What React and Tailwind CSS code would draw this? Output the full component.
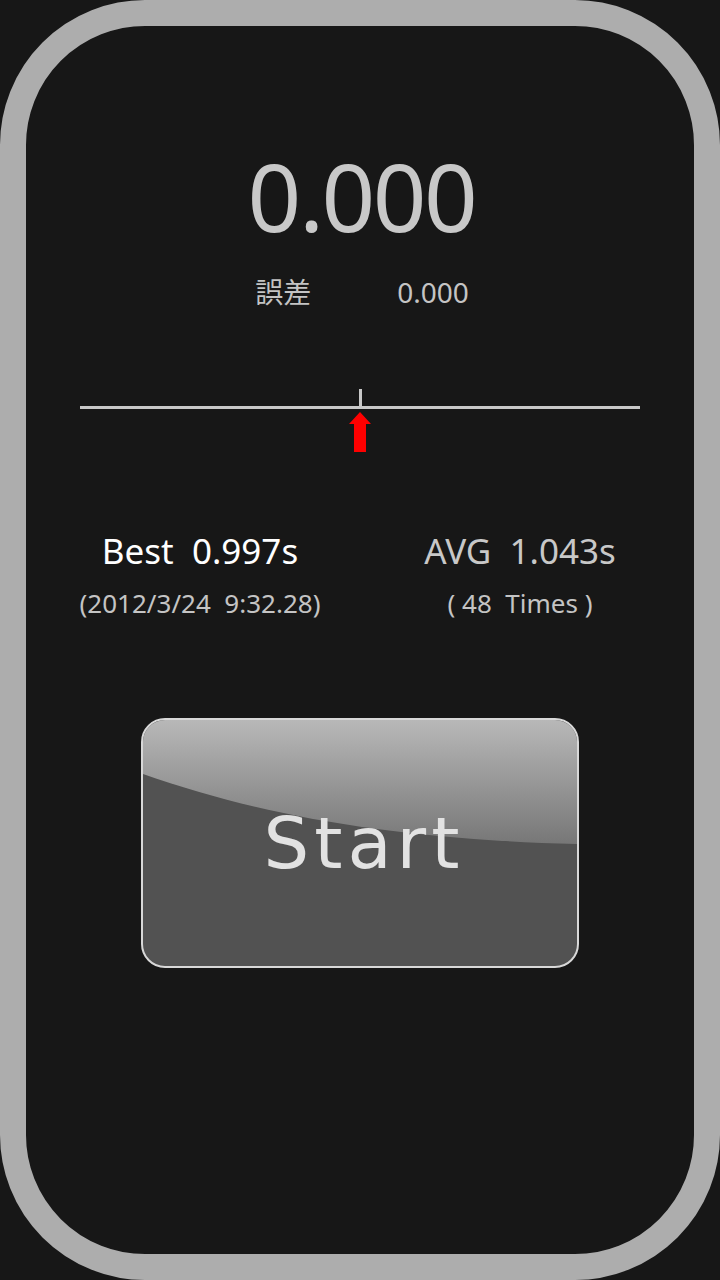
import React from "react";

function Arrow() {
  return (
    <svg width="24" height="42" viewBox="0 0 24 42" className="mt-[2px]">
      <polygon points="12,1 23,13 18,13 18,41 6,41 6,13 1,13" fill="#ff0000" />
    </svg>
  );
}

function Gloss() {
  return (
    <svg
      className="absolute inset-0"
      width="434"
      height="246"
      viewBox="0 0 434 246"
      preserveAspectRatio="none"
    >
      <defs>
        <linearGradient id="gloss" x1="0" y1="0" x2="0" y2="124" gradientUnits="userSpaceOnUse">
          <stop offset="0" stopColor="#b8b8b8" />
          <stop offset="1" stopColor="#777777" />
        </linearGradient>
      </defs>
      <path d="M0,0 H434 V124 C250,119 120,96 0,54 Z" fill="url(#gloss)" />
    </svg>
  );
}

export default function App() {
  return (
    <div className="h-[1280px] w-[720px] bg-[#171717] font-['Noto_Sans','Noto_Sans_CJK_JP',sans-serif]">
      <div className="flex h-full w-full flex-col items-center rounded-[145px] border-[26px] border-[#adadad]">
        {/* timer */}
        <div className="mt-[123px] pl-[3px] text-[94px] leading-none tracking-[-2.5px] text-[#c8c8c8]">0.000</div>

        <div className="mt-[34px] flex items-baseline gap-[86px] pl-[4px] text-[28px] leading-[28px] text-[#c4c4c4]">
          <span className="font-['Noto_Sans_CJK_JP',sans-serif]">誤差</span>
          <span>0.000</span>
        </div>

        {/* ruler */}
        <div className="mt-[83px] flex w-[560px] flex-col items-center">
          <div className="h-[17px] w-[3px] bg-[#c8c8c8]" />
          <div className="h-[3px] w-full bg-[#c8c8c8]" />
          <Arrow />
        </div>

        {/* stats */}
        <div className="mt-[80px] grid w-[640px] grid-cols-2">
          <div className="flex flex-col items-center">
            <div className="whitespace-pre text-[35px] leading-none text-white">Best  0.997s</div>
            <div className="mt-[22px] whitespace-pre text-[26px] leading-none text-[#c4c4c4]">
              (2012/3/24  9:32.28)
            </div>
          </div>
          <div className="flex flex-col items-center">
            <div className="whitespace-pre text-[35px] leading-none text-[#c8c8c8]">AVG  1.043s</div>
            <div className="mt-[22px] whitespace-pre text-[26px] leading-none text-[#c4c4c4]">
              ( 48  Times )
            </div>
          </div>
        </div>

        {/* start button */}
        <button className="relative mt-[102px] h-[250px] w-[438px] overflow-hidden rounded-[24px] border-2 border-[#d8d8d8] bg-[#525252]">
          <Gloss />
          <span className="relative flex h-full w-full items-center justify-center pl-[8px] font-['DejaVu_Sans',sans-serif] text-[72px] leading-none tracking-[5px] text-[#e2e2e2]">
            Start
          </span>
        </button>
      </div>
    </div>
  );
}
